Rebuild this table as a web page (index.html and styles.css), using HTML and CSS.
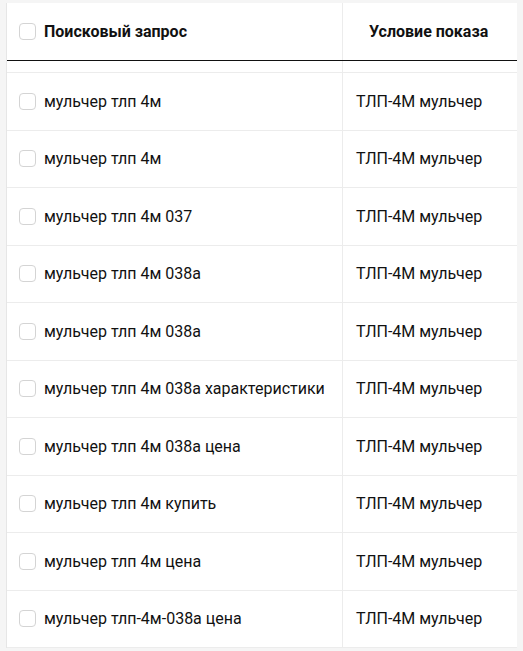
FILE: index.html
```html
<!DOCTYPE html>
<html lang="ru">
<head>
<meta charset="utf-8">
<link rel="stylesheet" href="styles.css">
</head>
<body>
<div class="table">
  <div class="row head">
    <div class="cell c1"><span class="cb"></span><span class="th">Поисковый запрос</span></div>
    <div class="cell c2 hc"><span class="th">Условие показа</span></div>
  </div>
  <div class="row spacer"><div class="cell c1"></div><div class="cell c2"></div></div>
  <div class="row"><div class="cell c1"><span class="cb"></span>мульчер тлп 4м</div><div class="cell c2">ТЛП-4М мульчер</div></div>
  <div class="row"><div class="cell c1"><span class="cb"></span>мульчер тлп 4м</div><div class="cell c2">ТЛП-4М мульчер</div></div>
  <div class="row"><div class="cell c1"><span class="cb"></span>мульчер тлп 4м 037</div><div class="cell c2">ТЛП-4М мульчер</div></div>
  <div class="row"><div class="cell c1"><span class="cb"></span>мульчер тлп 4м 038а</div><div class="cell c2">ТЛП-4М мульчер</div></div>
  <div class="row"><div class="cell c1"><span class="cb"></span>мульчер тлп 4м 038а</div><div class="cell c2">ТЛП-4М мульчер</div></div>
  <div class="row"><div class="cell c1"><span class="cb"></span>мульчер тлп 4м 038а характеристики</div><div class="cell c2">ТЛП-4М мульчер</div></div>
  <div class="row"><div class="cell c1"><span class="cb"></span>мульчер тлп 4м 038а цена</div><div class="cell c2">ТЛП-4М мульчер</div></div>
  <div class="row"><div class="cell c1"><span class="cb"></span>мульчер тлп 4м купить</div><div class="cell c2">ТЛП-4М мульчер</div></div>
  <div class="row"><div class="cell c1"><span class="cb"></span>мульчер тлп 4м цена</div><div class="cell c2">ТЛП-4М мульчер</div></div>
  <div class="row"><div class="cell c1"><span class="cb"></span>мульчер тлп-4м-038а цена</div><div class="cell c2">ТЛП-4М мульчер</div></div>
</div>
</body>
</html>
```
FILE: styles.css
```css
html, body {
  margin: 0;
  padding: 0;
  background: #f5f5f5;
}
body {
  padding: 3px 0 0 6px;
  font-family: Roboto, "Liberation Sans", sans-serif;
  font-size: 16px;
  color: #111;
}
.table {
  width: 510px;
  background: #fff;
  border-left: 1px solid #e6e6e6;
}
.row {
  display: grid;
  grid-template-columns: 335px 1fr;
  height: 57.5px;
  border-bottom: 1px solid #ececec;
  box-sizing: border-box;
}
.row.head {
  height: 58px;
  border-bottom: 1.5px solid #111;
}
.row.spacer {
  height: 12px;
}
.cell {
  display: flex;
  align-items: center;
}
.c1 {
  padding-left: 12px;
}
.c2 {
  border-left: 1px solid #ececec;
  padding-left: 13px;
}
.hc {
  padding-left: 26px;
}
.th {
  font-weight: 700;
}
.cb {
  width: 15px;
  height: 15px;
  border: 1px solid #d4d4d4;
  border-radius: 4px;
  margin-right: 8px;
  flex: none;
  background: #fff;
}
```
